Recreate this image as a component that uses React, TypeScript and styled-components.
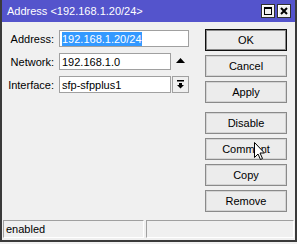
import React from 'react';
import styled, { createGlobalStyle } from 'styled-components';

const GlobalStyle = createGlobalStyle`
  html, body {
    margin: 0;
    padding: 0;
    background: #f0f0f0;
  }
  body {
    font-family: "Liberation Sans", Arial, sans-serif;
    font-size: 11px;
    color: #000;
  }
`;

const Window = styled.div`
  position: relative;
  box-sizing: border-box;
  width: 297px;
  height: 242px;
  display: flex;
  flex-direction: column;
  background: #f0f0f0;
  border: 2px solid #3a3a3a;
  border-top: none;
`;

const TitleBar = styled.div`
  height: 22px;
  display: flex;
  align-items: center;
  padding: 0 4px 0 5px;
  background: #5454cc;
  color: #fff;
  font-size: 11px;
`;

const Title = styled.div`
  flex: 1;
  white-space: nowrap;
`;

const TitleButtons = styled.div`
  display: flex;
  gap: 2px;
`;

const TitleButton = styled.div`
  box-sizing: border-box;
  width: 14px;
  height: 14px;
  display: flex;
  align-items: center;
  justify-content: center;
  background: #f0f0f0;
  border: 1px solid #303030;
  box-shadow: inset 1px 1px 0 #fff;
`;

const Content = styled.div`
  flex: 1;
  display: flex;
  gap: 16px;
  padding-top: 7px;
`;

const Form = styled.div`
  margin-top: 1px;
  display: grid;
  grid-template-columns: 52px 130px;
  grid-auto-rows: 17px;
  column-gap: 5px;
  row-gap: 6px;
  align-content: start;
`;

const Label = styled.div`
  display: flex;
  align-items: center;
  justify-content: flex-end;
  white-space: nowrap;
`;

const Field = styled.div`
  display: flex;
  align-items: stretch;
  gap: 1px;
`;

const Input = styled.div<{ $width: number }>`
  box-sizing: border-box;
  width: ${p => p.$width}px;
  display: flex;
  align-items: center;
  padding-left: 2px;
  background: #fff;
  border: 1px solid #a0a0a0;
  white-space: nowrap;
`;

const Selected = styled.span`
  background: #3399ff;
  color: #fff;
  padding: 1px 0;
`;

const ArrowCell = styled.div`
  flex: 1;
  display: flex;
  justify-content: center;
  padding-top: 5px;
`;

const DropButton = styled.div`
  box-sizing: border-box;
  width: 17px;
  display: flex;
  align-items: center;
  justify-content: center;
  background: #f0f0f0;
  border: 1px solid #a0a0a0;
`;

const Buttons = styled.div`
  width: 82px;
  display: flex;
  flex-direction: column;
  gap: 4px;
`;

const Button = styled.div<{ $default?: boolean; $spaced?: boolean }>`
  box-sizing: border-box;
  height: 22px;
  display: flex;
  align-items: center;
  justify-content: center;
  background: #ececec;
  border: 1px solid ${p => (p.$default ? '#101010' : '#8a8a8a')};
  box-shadow: inset 0 0 0 1px ${p => (p.$default ? '#8a8a8a' : '#d4d4d4')};
  margin-top: ${p => (p.$spaced ? '5px' : '0')};
`;

const StatusBar = styled.div`
  height: 18px;
  display: flex;
  gap: 2px;
  padding: 0 1px 2px 1px;
`;

const StatusPanel = styled.div<{ $width?: number }>`
  box-sizing: border-box;
  ${p => (p.$width ? `width: ${p.$width}px;` : 'flex: 1;')}
  display: flex;
  align-items: center;
  padding-left: 2px;
  border-top: 1px solid #a0a0a0;
  border-left: 1px solid #a0a0a0;
  border-bottom: 1px solid #fff;
  border-right: 1px solid #fff;
`;

const Cursor = styled.svg`
  position: absolute;
  left: 251px;
  top: 141px;
`;

const App: React.FC = () => {
  return <>
    <GlobalStyle />
    <Window>
      <TitleBar>
        <Title>Address &lt;192.168.1.20/24&gt;</Title>
        <TitleButtons>
          <TitleButton>
            <svg width="8" height="8" viewBox="0 0 8 8">
              <rect x="0.5" y="0.5" width="7" height="7" fill="none" stroke="#000" />
              <rect x="0" y="0" width="8" height="2" fill="#000" />
            </svg>
          </TitleButton>
          <TitleButton>
            <svg width="8" height="8" viewBox="0 0 8 8">
              <path d="M1 1 L7 7 M7 1 L1 7" stroke="#000" strokeWidth="2" />
            </svg>
          </TitleButton>
        </TitleButtons>
      </TitleBar>
      <Content>
        <Form>
          <Label>Address:</Label>
          <Field>
            <Input $width={130}><Selected>192.168.1.20/24</Selected></Input>
          </Field>
          <Label>Network:</Label>
          <Field>
            <Input $width={112}>192.168.1.0</Input>
            <ArrowCell>
              <svg width="9" height="5" viewBox="0 0 9 5">
                <polygon points="0,5 9,5 4.5,0" fill="#000" />
              </svg>
            </ArrowCell>
          </Field>
          <Label>Interface:</Label>
          <Field>
            <Input $width={112}>sfp-sfpplus1</Input>
            <DropButton>
              <svg width="7" height="9" viewBox="0 0 7 9">
                <rect x="0" y="0" width="7" height="1.5" fill="#000" />
                <rect x="2" y="3" width="3" height="2" fill="#000" />
                <polygon points="0,5 7,5 3.5,8.5" fill="#000" />
              </svg>
            </DropButton>
          </Field>
        </Form>
        <Buttons>
          <Button $default>OK</Button>
          <Button>Cancel</Button>
          <Button>Apply</Button>
          <Button $spaced>Disable</Button>
          <Button>Comment</Button>
          <Button>Copy</Button>
          <Button>Remove</Button>
        </Buttons>
      </Content>
      <StatusBar>
        <StatusPanel $width={141}>enabled</StatusPanel>
        <StatusPanel />
      </StatusBar>
      <Cursor width="13" height="20" viewBox="0 0 13 20">
        <path d="M1.5 1.5 L1.5 16.5 L5 13 L7.5 18.5 L9.5 17.5 L7 12 L11.5 12 Z" fill="#fff" stroke="#000" strokeWidth="1" />
      </Cursor>
    </Window>
  </>;
};

export default App;
